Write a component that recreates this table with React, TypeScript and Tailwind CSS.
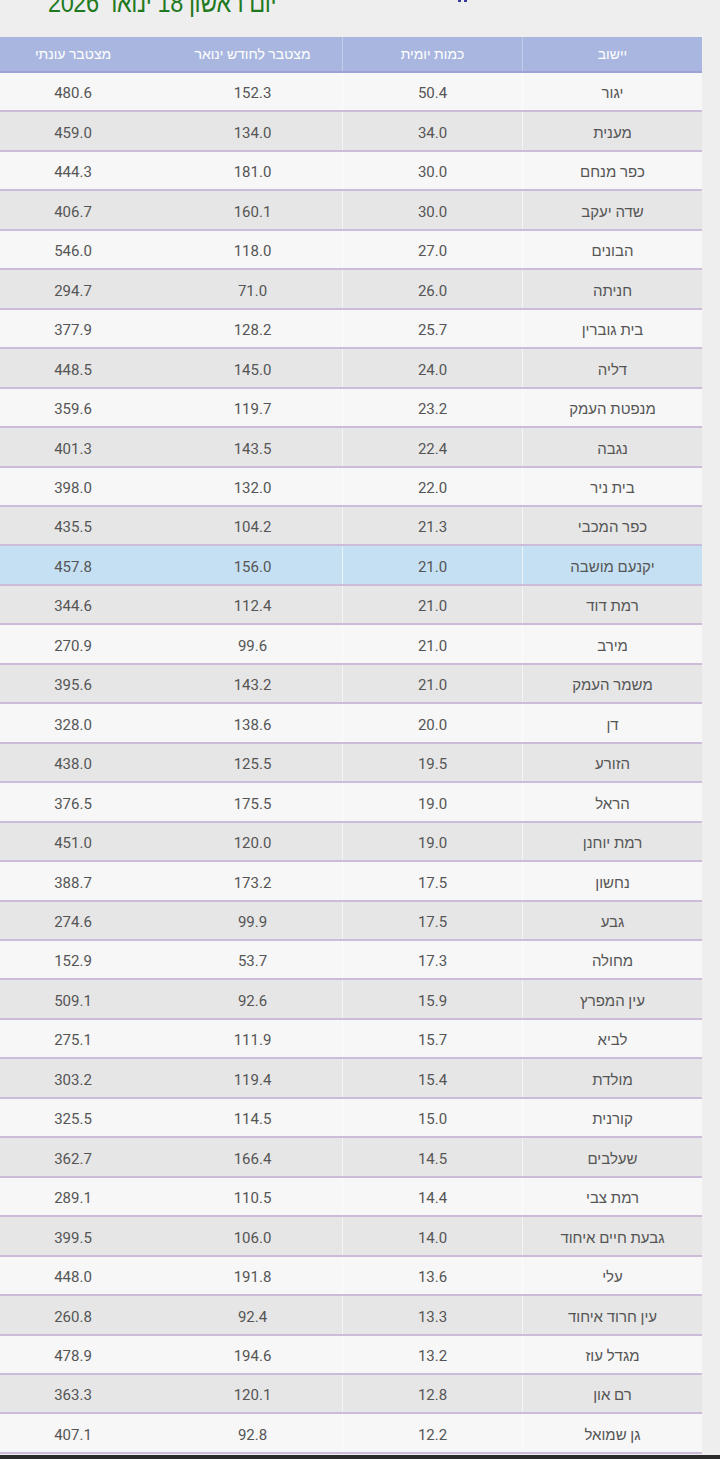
const rows: [string, string, string, string][] = [
  ["יגור", "50.4", "152.3", "480.6"],
  ["מענית", "34.0", "134.0", "459.0"],
  ["כפר מנחם", "30.0", "181.0", "444.3"],
  ["שדה יעקב", "30.0", "160.1", "406.7"],
  ["הבונים", "27.0", "118.0", "546.0"],
  ["חניתה", "26.0", "71.0", "294.7"],
  ["בית גוברין", "25.7", "128.2", "377.9"],
  ["דליה", "24.0", "145.0", "448.5"],
  ["מנפטת העמק", "23.2", "119.7", "359.6"],
  ["נגבה", "22.4", "143.5", "401.3"],
  ["בית ניר", "22.0", "132.0", "398.0"],
  ["כפר המכבי", "21.3", "104.2", "435.5"],
  ["יקנעם מושבה", "21.0", "156.0", "457.8"],
  ["רמת דוד", "21.0", "112.4", "344.6"],
  ["מירב", "21.0", "99.6", "270.9"],
  ["משמר העמק", "21.0", "143.2", "395.6"],
  ["דן", "20.0", "138.6", "328.0"],
  ["הזורע", "19.5", "125.5", "438.0"],
  ["הראל", "19.0", "175.5", "376.5"],
  ["רמת יוחנן", "19.0", "120.0", "451.0"],
  ["נחשון", "17.5", "173.2", "388.7"],
  ["גבע", "17.5", "99.9", "274.6"],
  ["מחולה", "17.3", "53.7", "152.9"],
  ["עין המפרץ", "15.9", "92.6", "509.1"],
  ["לביא", "15.7", "111.9", "275.1"],
  ["מולדת", "15.4", "119.4", "303.2"],
  ["קורנית", "15.0", "114.5", "325.5"],
  ["שעלבים", "14.5", "166.4", "362.7"],
  ["רמת צבי", "14.4", "110.5", "289.1"],
  ["גבעת חיים איחוד", "14.0", "106.0", "399.5"],
  ["עלי", "13.6", "191.8", "448.0"],
  ["עין חרוד איחוד", "13.3", "92.4", "260.8"],
  ["מגדל עוז", "13.2", "194.6", "478.9"],
  ["רם און", "12.8", "120.1", "363.3"],
  ["גן שמואל", "12.2", "92.8", "407.1"],
];

const font = { fontFamily: "Roboto, 'Liberation Sans', sans-serif" };

export default function App() {
  return (
    <div className="h-[1459px] w-[720px] overflow-hidden bg-[#eeeeee]" style={font}>
      <div className="relative h-[37px]">
        <div
          dir="rtl"
          className="absolute left-[48px] top-[-13px] origin-left scale-x-[0.84] whitespace-nowrap text-[28px] leading-[32px] tracking-[-0.5px] text-[#1f7a1f]"
          style={{ fontFamily: "'Liberation Sans', sans-serif" }}
        >
          יום ראשון 18 ינואר 2026
        </div>
        <div className="absolute left-[458px] top-0 flex gap-[3px]">
          <div className="h-[2px] w-[3px] bg-[#3a3aa0]" />
          <div className="h-[2px] w-[3px] bg-[#3a3aa0]" />
        </div>
      </div>

      <div dir="rtl" className="w-[702px]">
        <div className="flex h-[36px] border-b-2 border-[#9ea2d6] bg-[#a9b7e0] text-[14px] text-white">
          <div className="flex w-[179px] items-center justify-center">יישוב</div>
          <div className="flex w-[180px] items-center justify-center border-r border-[#c3cceb]">כמות יומית</div>
          <div className="flex w-[180px] items-center justify-center border-r border-[#c3cceb]">מצטבר לחודש ינואר</div>
          <div className="flex w-[163px] items-center justify-center pr-[17px]">מצטבר עונתי</div>
        </div>
        {rows.map((r, i) => {
          const hl = r[0] === "יקנעם מושבה";
          const bg = hl ? "bg-[#c5e0f2]" : i % 2 === 0 ? "bg-[#f7f7f7]" : "bg-[#e6e6e6]";
          return (
            <div
              key={r[0]}
              className={`flex h-[39.46px] border-b-2 border-[#cdbcd9] text-[15px] text-[#555555] ${bg}`}
            >
              <div className="flex w-[179px] items-center justify-center pt-[4px]">{r[0]}</div>
              <div className="flex w-[180px] items-center justify-center border-r border-white/60 pt-[4px]">{r[1]}</div>
              <div className="flex w-[180px] items-center justify-center border-r border-white/60 pt-[4px]">{r[2]}</div>
              <div className="flex w-[163px] items-center justify-center pr-[17px] pt-[4px]">{r[3]}</div>
            </div>
          );
        })}
      </div>
      <div className="mt-[1px] h-[20px] bg-[#2b2b2b]" />
    </div>
  );
}
